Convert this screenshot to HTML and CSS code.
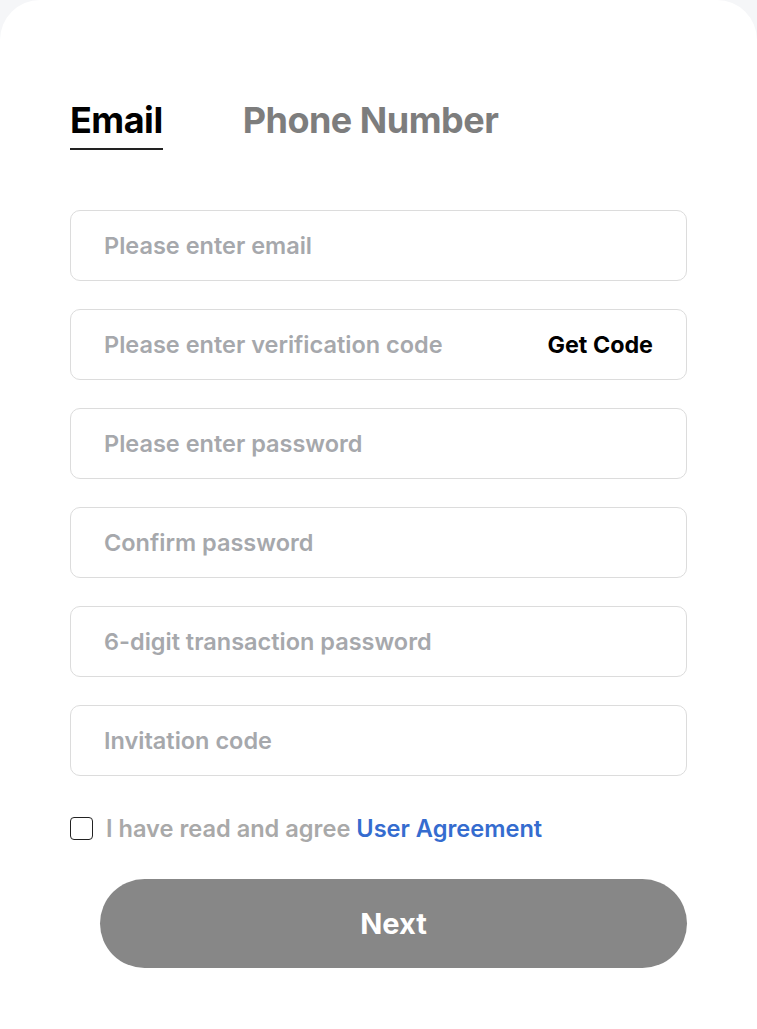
FILE: index.html
```html
<!DOCTYPE html>
<html lang="en">
<head>
    <meta charset="UTF-8">
    <meta name="viewport" content="width=device-width, initial-scale=1.0">
    <title>Register</title>
    <link rel="stylesheet" href="styles.css">
</head>
<body>
    <div class="register-card">
        <!-- Tabs -->
        <div class="tabs">
            <div class="tab active">Email</div>
            <div class="tab">Phone Number</div>
        </div>

        <!-- Fields -->
        <div class="fields">
            <div class="field">
                <input type="text" placeholder="Please enter email">
            </div>
            <div class="field">
                <input type="text" placeholder="Please enter verification code">
                <span class="get-code">Get Code</span>
            </div>
            <div class="field">
                <input type="password" placeholder="Please enter password">
            </div>
            <div class="field">
                <input type="password" placeholder="Confirm password">
            </div>
            <div class="field">
                <input type="password" placeholder="6-digit transaction password">
            </div>
            <div class="field">
                <input type="text" placeholder="Invitation code">
            </div>
        </div>

        <label class="agree">
            <span class="check"></span>
            <span class="agree-text">I have read and agree <a href="#">User Agreement</a></span>
        </label>

        <button class="next-button">Next</button>
    </div>
</body>
</html>
```

FILE: styles.css
```css
/* General styles */
body {
    font-family: Inter, "Noto Sans", sans-serif;
    background-color: #f5f6f8;
    margin: 0;
    padding: 0;
}

.register-card {
    background-color: #fff;
    border-radius: 40px 40px 0 0;
    min-height: 1029px;
    padding: 98px 70px 0 70px;
    box-sizing: border-box;
}

.tabs {
    display: flex;
    gap: 80px;
}

.tab {
    font-size: 36px;
    font-weight: 700;
    color: #7d7d7d;
    line-height: 44px;
    padding-bottom: 6px;
    letter-spacing: -0.5px;
}

.tab.active {
    color: #000;
    border-bottom: 2px solid #222;
}

.fields {
    margin-top: 60px;
    display: flex;
    flex-direction: column;
    gap: 28px;
}

.field {
    display: flex;
    align-items: center;
    height: 71px;
    border: 1px solid #dcdcdc;
    border-radius: 10px;
    padding: 0 33px;
    box-sizing: border-box;
}

.field input {
    flex: 1;
    border: none;
    outline: none;
    font-family: inherit;
    font-size: 23.5px;
    font-weight: 600;
    color: #333;
    padding: 0;
    background: transparent;
}

.field input::placeholder {
    color: #a6a8ac;
}

.get-code {
    font-size: 23.3px;
    font-weight: 700;
    color: #000;
}

.agree {
    display: flex;
    align-items: center;
    gap: 13px;
    margin-top: 38px;
    cursor: pointer;
}

.check {
    width: 21px;
    height: 21px;
    border: 1.5px solid #222;
    border-radius: 4px;
}

.agree-text {
    font-size: 23.6px;
    font-weight: 600;
    color: #a9a9a9;
}

.agree-text a {
    color: #356ccf;
    text-decoration: none;
}

.next-button {
    display: block;
    width: 587px;
    height: 89px;
    margin: 36px 0 0 30px;
    border: none;
    border-radius: 45px;
    background-color: #878787;
    color: #fff;
    font-family: inherit;
    font-size: 29px;
    font-weight: 700;
    cursor: pointer;
}
```
